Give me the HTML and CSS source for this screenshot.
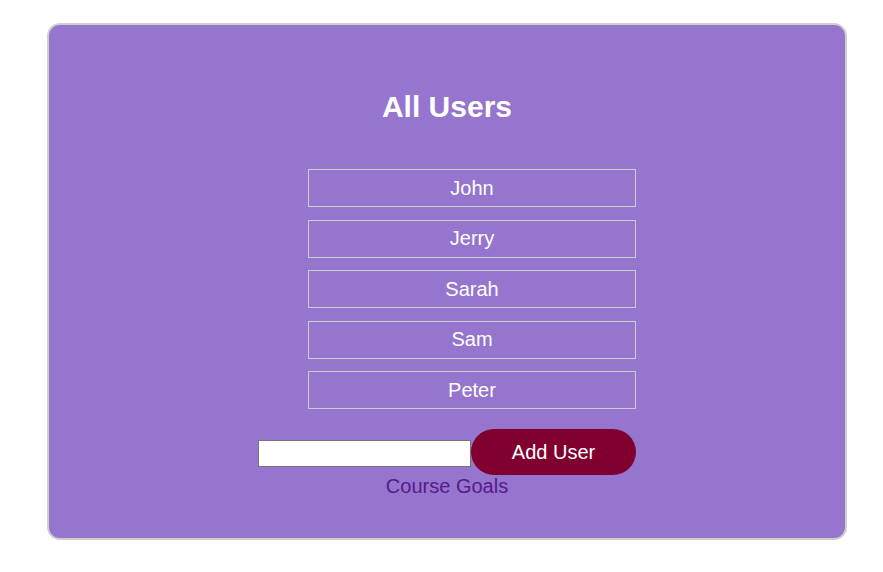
FILE: index.html
```html
<!DOCTYPE html>
<html lang="en">
<head>
<meta charset="utf-8">
<title>All Users</title>
<link rel="stylesheet" href="styles.css">
</head>
<body>
<div class="page">
  <section class="card">
    <h2 class="title">All Users</h2>
    <div class="content">
      <ul class="users">
        <li class="user">John</li>
        <li class="user">Jerry</li>
        <li class="user">Sarah</li>
        <li class="user">Sam</li>
        <li class="user">Peter</li>
      </ul>
      <form class="add-form" onsubmit="return false">
        <input class="name-input" type="text" aria-label="User name">
        <button class="add-btn" type="submit">Add User</button>
      </form>
    </div>
    <a class="goals-link" href="#">Course Goals</a>
  </section>
</div>
</body>
</html>
```
FILE: styles.css
```css
* { box-sizing: border-box; }
html, body { margin: 0; padding: 0; background: #fff; }
body { font-family: "Liberation Sans", Arial, sans-serif; }
.page { padding: 23px 0 0 47px; }
.card {
  width: 800px;
  height: 517px;
  background: #9575cd;
  border: 2px solid #cfcfcf;
  border-radius: 13px;
  display: flex;
  flex-direction: column;
  align-items: center;
  padding-top: 65px;
}
.title {
  margin: 0;
  font-size: 30px;
  font-weight: bold;
  color: #fff;
  line-height: normal;
}
.content {
  width: 378px;
  margin-top: 45px;
}
.users {
  list-style: none;
  margin: 0;
  padding: 0 0 0 50px;
  display: flex;
  flex-direction: column;
  gap: 12.5px;
}
.user {
  height: 38px;
  border: 1px solid #cccccc;
  color: #fff;
  font-size: 20px;
  display: flex;
  align-items: center;
  justify-content: center;
}
.add-form {
  margin-top: 20px;
  display: flex;
  align-items: center;
}
.name-input {
  width: 213px;
  height: 27px;
  margin: 3px 0 0 0;
  border: 1px solid #767676;
  background: #fff;
  padding: 2px;
  font-size: 14px;
}
.add-btn {
  width: 165px;
  height: 46px;
  border: none;
  border-radius: 23px;
  background: #800030;
  color: #fff;
  font-family: "Liberation Sans", Arial, sans-serif;
  font-size: 20px;
  padding: 0;
  cursor: pointer;
}
.goals-link {
  color: #551a8b;
  font-size: 20px;
  text-decoration: none;
  line-height: 23px;
}
```
